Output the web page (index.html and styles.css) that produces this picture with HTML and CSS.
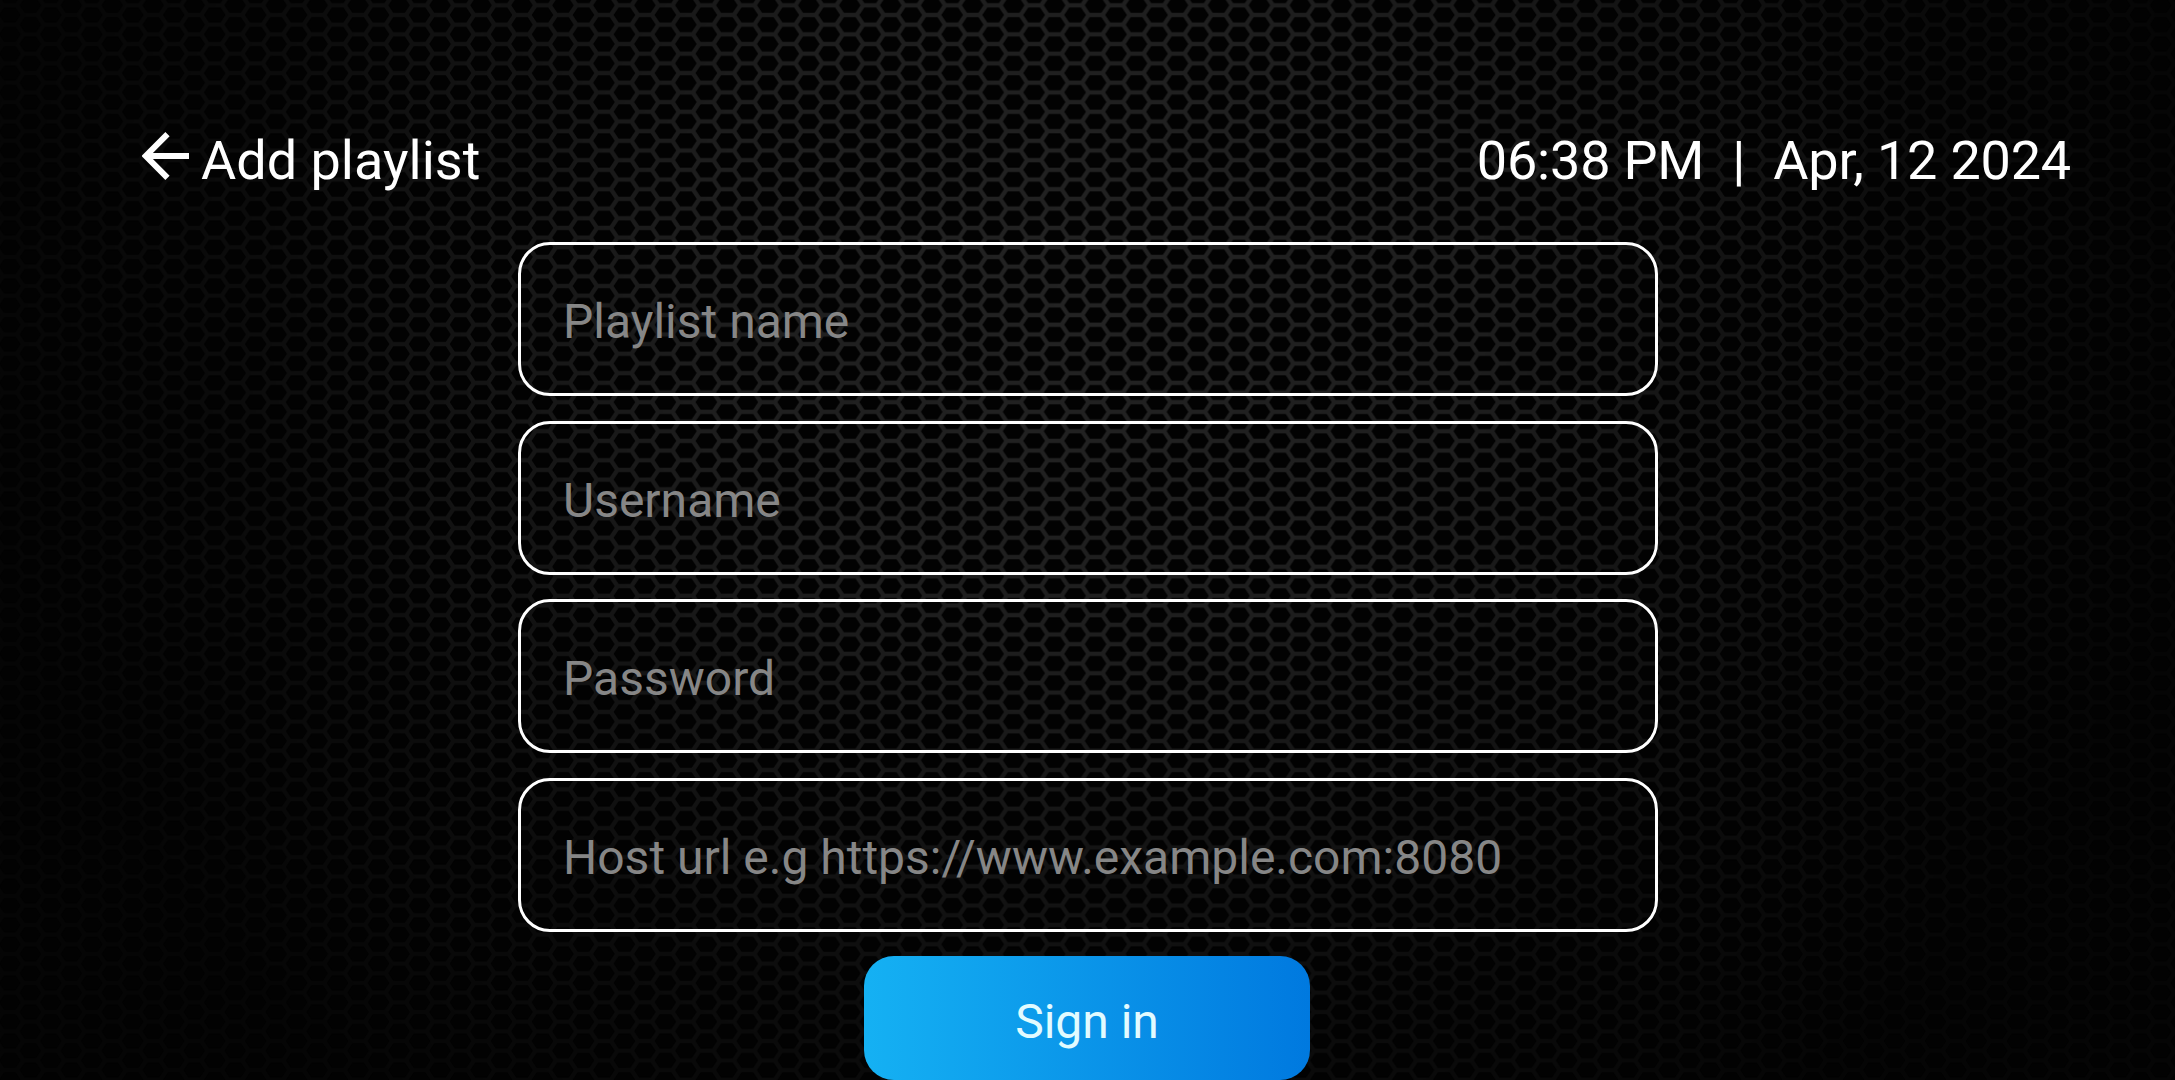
FILE: index.html
```
<!DOCTYPE html>
<html lang="en">
<head>
    <meta charset="UTF-8">
    <meta name="viewport" content="width=device-width, initial-scale=1.0">
    <title>Add playlist</title>
    <link rel="stylesheet" href="styles.css">
</head>
<body>
    <!-- Honeycomb background -->
    <svg class="honeycomb" aria-hidden="true">
        <defs>
            <pattern id="hex" width="40.97" height="19.36" patternUnits="userSpaceOnUse" patternTransform="translate(767.8 5.3)">
                <path d="M-7 9.68H7L13.5 0H27.5L34 9.68H48M7 9.68L13.5 19.36H27.5L34 9.68" />
            </pattern>
        </defs>
        <rect width="100%" height="100%" fill="url(#hex)" />
    </svg>

    <div class="screen">
        <header class="header">
            <a href="#" class="back">
                <svg class="back-icon" viewBox="0 0 48 48">
                    <path d="M47 24H4M25.5 2.2L3.8 24L25.5 45.8" />
                </svg>
                <h1>Add playlist</h1>
            </a>
            <div class="clock">
                <span>06:38 PM</span>
                <span>|</span>
                <span>Apr, 12 2024</span>
            </div>
        </header>

        <form class="login-form">
            <input class="field" type="text" placeholder="Playlist name">
            <input class="field" type="text" placeholder="Username">
            <input class="field" type="text" placeholder="Password">
            <input class="field" type="text" placeholder="Host url e.g https://www.example.com:8080">
            <button class="sign-in" type="button">Sign in</button>
        </form>
    </div>
</body>
</html>
```
FILE: styles.css
```
* {
    margin: 0;
    padding: 0;
    box-sizing: border-box;
}

body {
    font-family: Roboto, sans-serif;
    background: #020202;
    color: #fff;
    height: 100vh;
    overflow: hidden;
}

/* Honeycomb mesh, brightest around the upper middle */
.honeycomb {
    position: absolute;
    top: 0;
    left: 0;
    width: 100%;
    height: 100%;
    mask-image: radial-gradient(ellipse 1120px 1000px at 1090px 300px, #000 0%, rgba(0, 0, 0, 0.85) 35%, rgba(0, 0, 0, 0.3) 75%, rgba(0, 0, 0, 0.12) 100%);
}

.honeycomb path {
    fill: none;
    stroke: #232323;
    stroke-width: 4.4;
}

.screen {
    position: relative;
    padding: 121px 104px 0 142px;
}

/* Header */
.header {
    display: flex;
    justify-content: space-between;
    height: 121px;
}

.back {
    display: flex;
    align-items: flex-start;
    gap: 11px;
    color: #fff;
    text-decoration: none;
}

.back-icon {
    width: 48px;
    height: 48px;
    margin-top: 11px;
}

.back-icon path {
    fill: none;
    stroke: #fff;
    stroke-width: 6;
}

h1,
.clock {
    font-size: 54px;
    font-weight: 400;
    line-height: 80px;
}

.clock {
    display: flex;
    gap: 28px;
    letter-spacing: -0.2px;
}

/* Form */
.login-form {
    display: flex;
    flex-direction: column;
    align-items: center;
    gap: 24.5px;
    width: 1140px;
    margin-left: 376px;
}

.field {
    width: 100%;
    height: 154px;
    padding: 5px 42px 0;
    border: 3px solid #fff;
    border-radius: 32px;
    background: none;
    color: #fff;
    font: 48px Roboto, sans-serif;
    outline: none;
}

.field::placeholder {
    color: #868686;
    opacity: 1;
}

.sign-in {
    width: 446px;
    height: 124px;
    padding-top: 6px;
    border: none;
    border-radius: 30px;
    background: linear-gradient(90deg, #15b1f3, #0079df);
    color: #e2fbff;
    font: 48px Roboto, sans-serif;
    transform: translateX(-1px);
}
```
